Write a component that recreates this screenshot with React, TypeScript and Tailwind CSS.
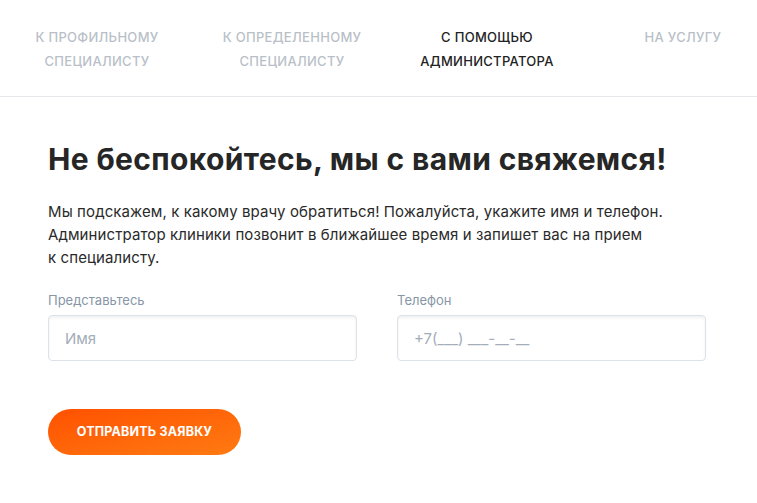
export default function App() {
  const tabs = [
    { lines: ['К профильному', 'специалисту'], active: false, cls: 'w-[194px]' },
    { lines: ['К определенному', 'специалисту'], active: false, cls: 'w-[196px]' },
    { lines: ['С помощью', 'администратора'], active: true, cls: 'w-[194px]' },
    { lines: ['На услугу'], active: false, cls: 'ml-auto w-[148px]' },
  ];

  return (
    <div className="min-h-screen bg-white font-['Inter',sans-serif] text-[#262626]">
      {/* Tabs */}
      <div className="flex h-[97px] border-b border-[#e6e8eb] pt-[25px]">
        {tabs.map((tab, i) => (
          <div
            key={i}
            className={`${tab.cls} text-center text-[13px] font-medium uppercase leading-[24px] tracking-[0.3px] ${
              tab.active ? 'text-[#222222]' : 'text-[#b9bfc8]'
            }`}
          >
            {tab.lines.map(line => (
              <div key={line}>{line}</div>
            ))}
          </div>
        ))}
      </div>

      <div className="px-[48px] pt-[42px]">
        <h1 className="text-[30px] font-bold leading-[40px] tracking-[0.35px] text-[#262626]">
          Не беспокойтесь, мы с вами свяжемся!
        </h1>
        <p className="mt-[21px] w-[660px] text-[15px] leading-[23px] tracking-[0.1px] text-[#2a2a2a]">
          Мы подскажем, к какому врачу обратиться! Пожалуйста, укажите имя и телефон.
          <br />
          Администратор клиники позвонит в ближайшее время и запишет вас на прием
          <br />к специалисту.
        </p>

        <div className="mt-[22px] grid w-[658px] grid-cols-2 gap-x-[40px]">
          <label className="block">
            <span className="block text-[13px] leading-[18px] text-[#8796a6]">Представьтесь</span>
            <input
              placeholder="Имя"
              className="mt-[6px] h-[46px] w-full rounded-[4px] border border-[#dde2e8] px-[16px] text-[15px] shadow-[inset_0_2px_3px_rgba(0,0,0,0.06)] outline-none placeholder:text-[#a3adb9]"
            />
          </label>
          <label className="block">
            <span className="block text-[13px] leading-[18px] text-[#8796a6]">Телефон</span>
            <input
              placeholder="+7(___) ___-__-__"
              className="mt-[6px] h-[46px] w-full rounded-[4px] border border-[#dde2e8] px-[16px] text-[15px] shadow-[inset_0_2px_3px_rgba(0,0,0,0.06)] outline-none placeholder:text-[#a3adb9]"
            />
          </label>
        </div>

        <button className="mt-[48px] h-[46px] w-[193px] rounded-full bg-gradient-to-br from-[#ff5000] to-[#ff7a12] text-[12.5px] font-bold uppercase tracking-[0.2px] text-white">
          Отправить заявку
        </button>
      </div>
    </div>
  );
}
